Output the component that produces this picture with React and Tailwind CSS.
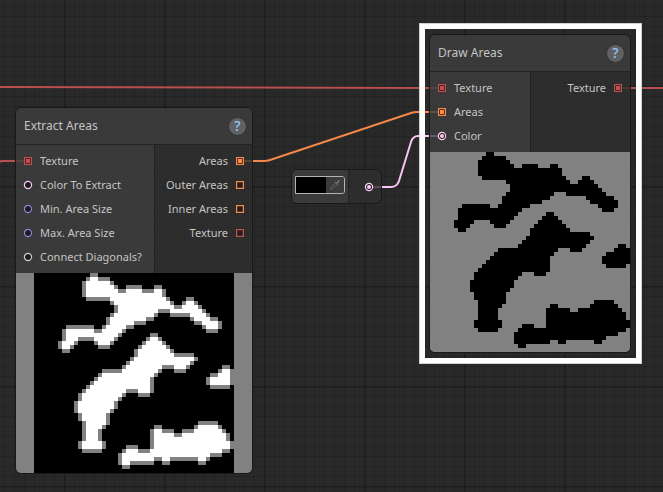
import React from 'react';

// Filled column ranges for each row of the 50 x 50 area map.
const AREA_ROWS = [
  [[14, 15]],
  [[13, 18]],
  [[12, 19]],
  [[12, 20], [23, 26], [30, 31]],
  [[12, 32]],
  [[12, 32]],
  [[13, 33], [38, 39]],
  [[19, 34], [37, 40]],
  [[20, 41]],
  [[20, 42]],
  [[19, 30], [34, 43]],
  [[18, 29], [39, 45]],
  [[18, 27], [40, 46]],
  [[8, 14], [17, 24], [42, 46]],
  [[7, 22], [43, 45]],
  [[7, 21], [29, 30]],
  [[7, 20], [28, 31]],
  [[6, 10], [15, 19], [27, 32]],
  [[6, 9], [16, 18], [26, 33]],
  [[7, 8], [25, 34]],
  [[25, 39]],
  [[24, 40]],
  [[23, 39]],
  [[22, 38], [47, 48]],
  [[17, 31], [35, 37], [46, 49]],
  [[16, 30], [44, 49]],
  [[15, 29], [43, 49]],
  [[14, 29], [43, 49]],
  [[13, 29], [44, 48]],
  [[12, 29]],
  [[11, 22], [26, 28]],
  [[11, 21]],
  [[10, 20]],
  [[10, 20]],
  [[10, 19]],
  [[11, 18]],
  [[11, 18]],
  [[12, 18], [41, 45]],
  [[12, 17], [30, 31], [40, 46]],
  [[12, 16], [29, 34], [37, 47]],
  [[12, 16], [29, 48]],
  [[12, 16], [29, 48]],
  [[11, 17], [29, 49]],
  [[11, 17], [23, 25], [29, 49]],
  [[12, 16], [22, 48]],
  [[21, 46]],
  [[21, 43]],
  [[21, 29], [32, 33], [41, 42]],
  [[22, 23]],
  [],
];

const isFilled = (x, y) =>
  x >= 0 && x < 50 && (AREA_ROWS[y] || []).some(([a, b]) => x >= a && x <= b);

const isInner = (x, y) =>
  isFilled(x - 1, y) && isFilled(x + 1, y) && isFilled(x, y - 1) && isFilled(x, y + 1);

function AreaMap({ label, background, edge, fill }) {
  const cells = [];
  AREA_ROWS.forEach((ranges, y) => {
    ranges.forEach(([a, b]) => {
      cells.push(<rect key={`${a}-${y}`} x={a} y={y} width={b - a + 1} height="1" fill={edge} />);
      for (let x = a; x <= b && fill !== edge; x += 1) {
        if (isInner(x, y)) {
          cells.push(<rect key={`i${x}-${y}`} x={x} y={y} width="1" height="1" fill={fill} />);
        }
      }
    });
  });
  return (
    <div className="flex justify-center bg-[#818181]">
      <svg viewBox="0 0 50 50" className="size-[200px]" shapeRendering="crispEdges" role="img" aria-label={label}>
        <rect width="50" height="50" fill={background} />
        {cells}
      </svg>
    </div>
  );
}

const COLORS = {
  texture: '#c04f4e',
  areas: '#fa8a4a',
  color: '#fbcbf4',
  number: '#8d83e0',
  bool: '#cfcfcf',
};

function Port({ type, round = false, linked = false }) {
  const color = COLORS[type];
  return (
    <svg viewBox="0 0 8 8" className="size-2 shrink-0 overflow-visible" aria-hidden="true">
      {round ? (
        <>
          <circle cx="4" cy="4" r="3.6" fill="#1c1c1c" stroke={color} strokeWidth="1.2" />
          {linked && <circle cx="4" cy="4" r="2" fill={color} />}
        </>
      ) : (
        <>
          <rect x="0.6" y="0.6" width="6.8" height="6.8" fill="#212121" stroke={color} strokeWidth="1.2" />
          {linked && <rect x="2" y="2" width="4" height="4" fill={color} />}
        </>
      )}
    </svg>
  );
}

function PortRow({ port, output = false }) {
  return (
    <li className={`flex h-6 items-center gap-2 whitespace-nowrap ${output ? 'flex-row-reverse' : ''}`}>
      <Port type={port.type} round={port.round} linked={port.linked} />
      <span>{port.name}</span>
    </li>
  );
}

function Node({ title, inputs, outputs, columns, children }) {
  return (
    <section className="overflow-hidden rounded-md border border-[#191919] bg-clip-padding text-[11px] text-[#c4c4c4]">
      <header className="flex h-[37px] items-center justify-between border-b border-[#232323] bg-[#3f3f3f]/80 pr-[5px] pl-2">
        <h2 className="text-[12px]">{title}</h2>
        <button
          type="button"
          aria-label={`Help for ${title}`}
          className="flex size-[19px] items-center justify-center rounded-full border border-[#333333] bg-[#616161] text-[14px] leading-none font-medium text-[#8fc8ff]"
        >
          ?
        </button>
      </header>
      <div className={`grid ${columns}`}>
        <ul className="border-r border-[#232323] bg-[#3f3f3f]/80 py-1 pl-2">
          {inputs.map((port) => (
            <PortRow key={port.name} port={port} />
          ))}
        </ul>
        <ul className="bg-[#2e2e2e]/80 py-1 pr-2">
          {outputs.map((port) => (
            <PortRow key={port.name} port={port} output />
          ))}
        </ul>
      </div>
      {children}
    </section>
  );
}

function ColorNode() {
  return (
    <section className="flex h-[35px] overflow-hidden rounded-md border border-[#191919]">
      <div className="border-r border-[#232323] bg-[#3f3f3f]/80 px-[3px] pt-1.5">
        <button
          type="button"
          aria-label="Pick color"
          className="flex h-[18px] w-[50px] overflow-hidden rounded-r-[3px] border border-[#b4b4b4]"
        >
          <span className="h-full w-[30px] bg-black" />
          <span className="flex h-full flex-1 items-center justify-center bg-[#3b3b3b]">
            <svg viewBox="0 0 12 12" className="size-3" aria-hidden="true">
              <path d="M7.2 3.2 9 1.2q1-.8 1.6 0t0 1.6L8.8 4.8l.5.7-.9.9-2.8-2.8.9-.9z" fill="#686868" />
              <path d="M6.2 4.3 2.1 8.4 1.3 10.7 3.6 9.9 7.7 5.8" fill="none" stroke="#636363" />
            </svg>
          </span>
        </button>
      </div>
      <div className="flex flex-1 items-center justify-end bg-[#2e2e2e]/80 pr-2">
        <Port type="color" round linked />
      </div>
    </section>
  );
}

const EXTRACT_INPUTS = [
  { name: 'Texture', type: 'texture', linked: true },
  { name: 'Color To Extract', type: 'color', round: true },
  { name: 'Min. Area Size', type: 'number', round: true },
  { name: 'Max. Area Size', type: 'number', round: true },
  { name: 'Connect Diagonals?', type: 'bool', round: true },
];
const EXTRACT_OUTPUTS = [
  { name: 'Areas', type: 'areas', linked: true },
  { name: 'Outer Areas', type: 'areas' },
  { name: 'Inner Areas', type: 'areas' },
  { name: 'Texture', type: 'texture' },
];
const DRAW_INPUTS = [
  { name: 'Texture', type: 'texture', linked: true },
  { name: 'Areas', type: 'areas', linked: true },
  { name: 'Color', type: 'color', round: true, linked: true },
];
const DRAW_OUTPUTS = [{ name: 'Texture', type: 'texture', linked: true }];

export default function App() {
  return (
    <main className="relative min-h-screen overflow-hidden bg-[#292929] bg-[linear-gradient(to_right,#00000028_2px,transparent_2px),linear-gradient(to_bottom,#00000028_2px,transparent_2px),linear-gradient(to_right,#00000022_1px,transparent_1px),linear-gradient(to_bottom,#00000022_1px,transparent_1px)] [background-position:64px_0,0_86px,4px_0,0_6px] [background-size:100px_100px,100px_100px,10px_10px,10px_10px] font-['Noto_Sans',sans-serif]">
      <svg className="absolute top-0 left-0 size-full" fill="none" strokeWidth="2" aria-hidden="true">
        <path d="M0 87 L442 88" stroke="#b9504f" />
        <path d="M618 88 H4000" stroke="#b9504f" />
        <path d="M-4 163 L2 161 H28" stroke="#b9504f" />
        <path d="M240 161 H264 Q267 161 270 160 L411 113 Q414 112 417 112 H442" stroke="#f3874a" />
        <path d="M369 187 H391 Q397 187 399 181 L411 142 Q413 136 418 136 H442" stroke="#f8c6f3" />
      </svg>

      <div className="absolute top-[107px] left-[15px] w-[238px]">
        <Node title="Extract Areas" inputs={EXTRACT_INPUTS} outputs={EXTRACT_OUTPUTS} columns="grid-cols-[139px_1fr]">
          <AreaMap label="Extracted areas preview" background="#000000" edge="#818181" fill="#ffffff" />
        </Node>
      </div>

      <div className="absolute top-[169px] left-[291px] w-[91px]">
        <ColorNode />
      </div>

      <div className="absolute top-[23px] left-[419px] border-[6px] border-white py-[5px] pr-[5px] pl-[4px] outline -outline-offset-1 outline-[#d0d0d0]">
        <div className="w-[202px]">
          <Node title="Draw Areas" inputs={DRAW_INPUTS} outputs={DRAW_OUTPUTS} columns="grid-cols-[101px_1fr]">
            <AreaMap label="Drawn areas preview" background="#818181" edge="#000000" fill="#000000" />
          </Node>
        </div>
      </div>
    </main>
  );
}
